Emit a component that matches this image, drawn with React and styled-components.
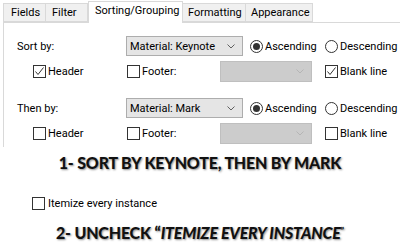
import React from "react";
import styled, { createGlobalStyle } from "styled-components";

const Global = createGlobalStyle`
  html, body { margin: 0; padding: 0; background: #fff; }
  body { font-family: Roboto, "Noto Sans", sans-serif; font-size: 11px; color: #000; }
`;

const Page = styled.div`
  width: 400px;
  height: 251px;
  overflow: hidden;
  background: #fff;
  display: flex;
  flex-direction: column;
`;

const TabStrip = styled.div`
  display: flex;
  align-items: flex-end;
  height: 22px;
  padding-left: 3px;
  position: relative;
  z-index: 1;
`;

const Tab = styled.div`
  box-sizing: border-box;
  width: ${(p) => p.$w}px;
  height: ${(p) => (p.$active ? 22 : 19)}px;
  margin-bottom: ${(p) => (p.$active ? -1 : 0)}px;
  background: ${(p) => (p.$active ? "#fff" : "#f0f0f0")};
  border: 1px solid #d9d9d9;
  border-bottom: ${(p) => (p.$active ? "none" : "1px solid #d9d9d9")};
  border-left: ${(p) => (p.$first || p.$active ? "1px solid #d9d9d9" : "none")};
  padding-left: ${(p) => p.$pl}px;
  line-height: ${(p) => (p.$active ? 18 : 17)}px;
  white-space: nowrap;
  overflow: hidden;
`;

const Panel = styled.div`
  box-sizing: border-box;
  margin-left: 3px;
  height: 125px;
  border-left: 1px solid #d9d9d9;
  border-top: 1px solid #d9d9d9;
  padding: 13px 0 0 13px;
  display: flex;
  flex-direction: column;
`;

const Row = styled.div`
  display: flex;
  align-items: center;
  height: ${(p) => p.$h}px;
  margin-top: ${(p) => p.$mt || 0}px;
  padding-left: ${(p) => p.$pl || 0}px;
`;

const Cell = styled.div`
  display: flex;
  align-items: center;
  width: ${(p) => p.$w}px;
  flex: none;
  white-space: nowrap;
`;

const Combo = styled.div`
  box-sizing: border-box;
  width: ${(p) => p.$w}px;
  height: ${(p) => p.$h}px;
  flex: none;
  background: ${(p) => (p.$disabled ? "#cccccc" : "#e5e5e5")};
  border: 1px solid ${(p) => (p.$disabled ? "#bfbfbf" : "#adadad")};
  display: flex;
  align-items: center;
  justify-content: space-between;
  padding: 0 7px 0 3px;
  margin-right: ${(p) => p.$mr || 0}px;
  white-space: nowrap;
`;

const Box = styled.span`
  box-sizing: border-box;
  width: 13px;
  height: 13px;
  border: 1px solid #333;
  background: #fff;
  flex: none;
  margin-right: 2px;
  display: flex;
  align-items: center;
  justify-content: center;
`;

const Radio = styled.span`
  box-sizing: border-box;
  width: 13px;
  height: 13px;
  border-radius: 50%;
  border: 1px solid #333;
  background: #fff;
  flex: none;
  margin-right: 2px;
  display: flex;
  align-items: center;
  justify-content: center;
  &::after {
    content: "";
    display: ${(p) => (p.$on ? "block" : "none")};
    width: 7px;
    height: 7px;
    border-radius: 50%;
    background: #333;
  }
`;

const Chevron = ({ disabled }) => (
  <svg width="8" height="5" viewBox="0 0 8 5">
    <polyline
      points="0.5,0.5 4,4 7.5,0.5"
      fill="none"
      stroke={disabled ? "#b5b5b5" : "#606060"}
      strokeWidth="1"
    />
  </svg>
);

const Check = ({ checked }) => (
  <Box>
    {checked && (
      <svg width="11" height="11" viewBox="0 0 11 11">
        <polyline points="1.5,5.5 4,8.5 9.5,1.5" fill="none" stroke="#333" strokeWidth="1" />
      </svg>
    )}
  </Box>
);

const Headline = styled.div`
  font-family: Lato, "Open Sans", sans-serif;
  font-weight: 900;
  font-size: 16px;
  line-height: 17px;
  letter-spacing: -0.2px;
  color: #111;
  text-align: center;
  text-shadow: 1px 1px 2px rgba(0, 0, 0, 0.45);
  margin-top: ${(p) => p.$mt}px;
  white-space: nowrap;
`;

const Em = styled.i`
  font-style: italic;
`;

const SmallQuote = styled.span`
  font-size: 9px;
  vertical-align: 5px;
`;

const Itemize = styled.div`
  display: flex;
  align-items: center;
  margin-top: ${(p) => p.$mt}px;
  padding-left: 32px;
  height: 14px;
  & > span:last-child { margin-left: 1px; }
`;

function SortBlock({ label, value, header, blank, first }) {
  return (
    <>
      <Row $h={20} $mt={first ? 0 : 16}>
        <Cell $w={109}>{label}</Cell>
        <Combo $w={117} $h={20} $mr={7}>
          <span>{value}</span>
          <Chevron />
        </Combo>
        <Cell $w={75}>
          <Radio $on />
          Ascending
        </Cell>
        <Cell $w={70}>
          <Radio />
          Descending
        </Cell>
      </Row>
      <Row $h={21} $mt={5} $pl={16}>
        <Cell $w={94}>
          <Check checked={header} />
          Header
        </Cell>
        <Cell $w={93}>
          <Check />
          Footer:
        </Cell>
        <Combo $w={92} $h={21} $mr={13} $disabled>
          <span />
          <Chevron disabled />
        </Combo>
        <Cell $w={70}>
          <Check checked={blank} />
          Blank line
        </Cell>
      </Row>
    </>
  );
}

export default function App() {
  return (
    <Page>
      <Global />
      <TabStrip>
        <Tab $w={43} $pl={7} $first>Fields</Tab>
        <Tab $w={42} $pl={6}>Filter</Tab>
        <Tab $w={95} $pl={6} $active>Sorting/Grouping</Tab>
        <Tab $w={63} $pl={5}>Formatting</Tab>
        <Tab $w={67} $pl={5}>Appearance</Tab>
      </TabStrip>
      <Panel>
        <SortBlock first label="Sort by:" value="Material: Keynote" header blank />
        <SortBlock label="Then by:" value="Material: Mark" />
      </Panel>
      <Headline $mt={7}>1- SORT BY KEYNOTE, THEN BY MARK</Headline>
      <Itemize $mt={25}>
        <Box />
        <span>Itemize every instance</span>
      </Itemize>
      <Headline $mt={12}>
        2- UNCHECK “<Em>ITEMIZE EVERY INSTANCE</Em>
        <SmallQuote>”</SmallQuote>
      </Headline>
    </Page>
  );
}
